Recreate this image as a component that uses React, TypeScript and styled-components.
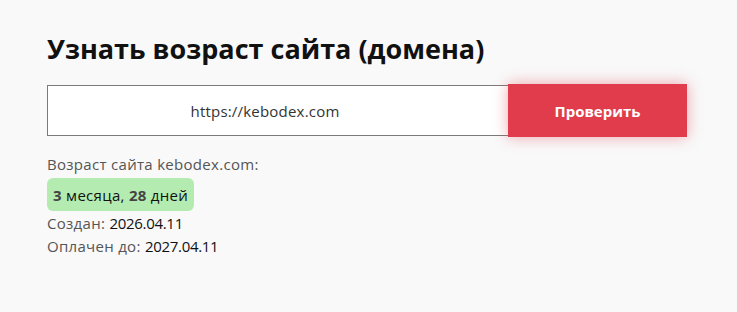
import React from 'react';
import styled, { createGlobalStyle } from 'styled-components';

const GlobalStyle = createGlobalStyle`
  html, body {
    margin: 0;
    padding: 0;
    background: #f9f9f9;
  }
  body {
    font-family: 'Open Sans', 'Liberation Sans', sans-serif;
  }
`;

const Page = styled.div`
  padding: 32px 47px 0 47px;
  width: 737px;
  height: 312px;
  box-sizing: border-box;
`;

const Title = styled.h1`
  margin: 0 0 18px 0;
  font-size: 27px;
  font-weight: 700;
  color: #111;
  line-height: 34px;
  letter-spacing: 0;
`;

const Form = styled.form`
  display: flex;
  align-items: center;
  width: 640px;
`;

const UrlInput = styled.input`
  box-sizing: border-box;
  width: 461px;
  height: 51px;
  padding: 0 26px 0 0;
  border: 1px solid #7a7a7a;
  border-right: none;
  background: #fff;
  text-align: center;
  font-family: inherit;
  font-size: 15px;
  letter-spacing: 0.2px;
  color: #333;
  outline: none;
`;

const Button = styled.button`
  width: 179px;
  height: 53px;
  border: none;
  background: #e03c4c;
  color: #fff;
  font-family: inherit;
  font-size: 15px;
  font-weight: 700;
  box-shadow: 0 0 14px rgba(224, 60, 76, 0.45);
  cursor: pointer;
`;

const Result = styled.div`
  margin-top: 16px;
  display: flex;
  flex-direction: column;
  align-items: flex-start;
  font-size: 15px;
  letter-spacing: 0.3px;
  color: #555;
`;

const Line = styled.div`
  line-height: 23px;
`;

const Value = styled.span`
  color: #111;
  letter-spacing: -0.3px;
`;

const AgeBadge = styled.div`
  margin: 2px 0 1px 0;
  padding: 0 6px;
  height: 33px;
  display: flex;
  align-items: center;
  background: #b3ebb1;
  border-radius: 6px;
  color: #111;
`;

const Num = styled.b`
  color: #444;
  font-weight: 700;
`;

export default function App() {
  return (
    <>
      <GlobalStyle />
      <Page>
        <Title>Узнать возраст сайта (домена)</Title>
        <Form onSubmit={(e) => e.preventDefault()}>
          <UrlInput defaultValue="https://kebodex.com" />
          <Button type="submit">Проверить</Button>
        </Form>
        <Result>
          <Line>Возраст сайта kebodex.com:</Line>
          <AgeBadge>
            <Num>3</Num>&nbsp;месяца,&nbsp;<Num>28</Num>&nbsp;дней
          </AgeBadge>
          <Line>
            Создан: <Value>2026.04.11</Value>
          </Line>
          <Line>
            Оплачен до: <Value>2027.04.11</Value>
          </Line>
        </Result>
      </Page>
    </>
  );
}
